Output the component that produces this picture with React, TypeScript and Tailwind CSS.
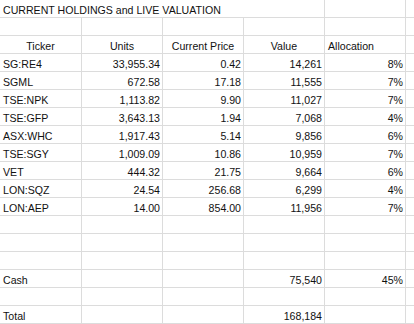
import React from "react";

const rows: string[][] = [
  ["", "", "", "", "", ""],
  ["Ticker", "Units", "Current Price", "Value", "Allocation", ""],
  ["SG:RE4", "33,955.34", "0.42", "14,261", "8%", ""],
  ["SGML", "672.58", "17.18", "11,555", "7%", ""],
  ["TSE:NPK", "1,113.82", "9.90", "11,027", "7%", ""],
  ["TSE:GFP", "3,643.13", "1.94", "7,068", "4%", ""],
  ["ASX:WHC", "1,917.43", "5.14", "9,856", "6%", ""],
  ["TSE:SGY", "1,009.09", "10.86", "10,959", "7%", ""],
  ["VET", "444.32", "21.75", "9,664", "6%", ""],
  ["LON:SQZ", "24.54", "256.68", "6,299", "4%", ""],
  ["LON:AEP", "14.00", "854.00", "11,956", "7%", ""],
  ["", "", "", "", "", ""],
  ["", "", "", "", "", ""],
  ["", "", "", "", "", ""],
  ["Cash", "", "", "75,540", "45%", ""],
  ["", "", "", "", "", ""],
  ["Total", "", "", "168,184", "", ""],
];

type Align = "left" | "right" | "center";

function Cell({ text, align, last }: { text: string; align: Align; last?: boolean }) {
  const a =
    align === "left"
      ? "justify-start pl-[3px]"
      : align === "right"
      ? "justify-end pr-[2px]"
      : "justify-center";
  return (
    <div
      className={`h-[18px] border-b border-[#dcdcdc] flex items-end overflow-hidden whitespace-nowrap leading-[13px] ${
        last ? "" : "border-r"
      } ${a}`}
    >
      {text}
    </div>
  );
}

export default function App() {
  return (
    <div
      className="w-[414px] h-[324px] bg-white text-[#111111] text-[10.6px] overflow-hidden"
      style={{ fontFamily: '"Liberation Sans", Arial, sans-serif' }}
    >
      <div className="grid grid-cols-[82px_81px_81px_81px_81px_1fr]">
        <div className="col-span-3 h-[18px] border-b border-[#dcdcdc] flex items-end pl-[3px] whitespace-nowrap leading-[13px]">
          CURRENT HOLDINGS and LIVE VALUATION
        </div>
        <Cell text="" align="left" />
        <Cell text="" align="left" />
        <Cell text="" align="left" last />
        {rows.map((r, i) =>
          r.map((c, j) => {
            let align: Align = j === 0 ? "left" : "right";
            if (i === 1) align = j === 4 ? "left" : "center";
            return <Cell key={`${i}-${j}`} text={c} align={align} last={j === 5} />;
          })
        )}
      </div>
    </div>
  );
}
